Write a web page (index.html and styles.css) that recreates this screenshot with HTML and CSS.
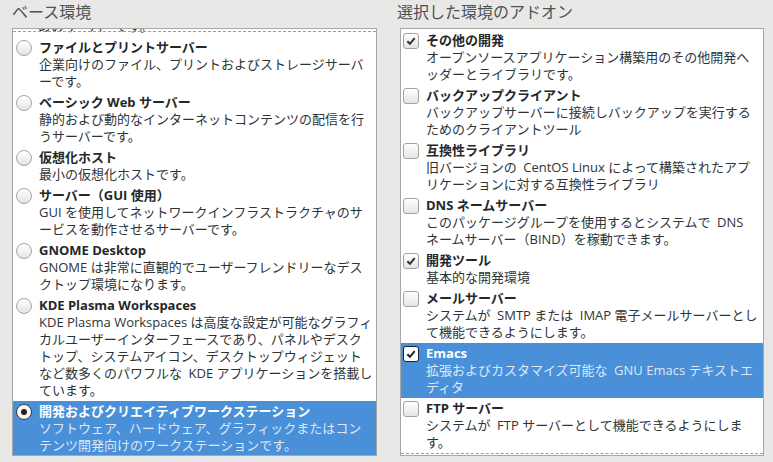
FILE: index.html
```html
<!DOCTYPE html>
<html lang="ja">

<head>
    <meta charset="UTF-8">
    <meta name="viewport" content="width=device-width, initial-scale=1.0">
    <title>ソフトウェアの選択</title>
    <link rel="stylesheet" href="styles.css">
</head>

<body>
    <div class="page">
        <section class="column">
            <h2 class="heading">ベース環境</h2>
            <div class="panel">
                <div class="undershoot topEdge"></div>
                <ul class="options scrolled">
                    <li class="option partial">
                        <div class="text">
                            <div class="desc">めのサーバーです。</div>
                        </div>
                    </li>
                    <li class="option">
                        <span class="radio"></span>
                        <div class="text">
                            <div class="title">ファイルとプリントサーバー</div>
                            <div class="desc">企業向けのファイル、プリントおよびストレージサーバ<br>ーです。</div>
                        </div>
                    </li>
                    <li class="option">
                        <span class="radio"></span>
                        <div class="text">
                            <div class="title">ベーシック Web サーバー</div>
                            <div class="desc">静的および動的なインターネットコンテンツの配信を行<br>うサーバーです。</div>
                        </div>
                    </li>
                    <li class="option">
                        <span class="radio"></span>
                        <div class="text">
                            <div class="title">仮想化ホスト</div>
                            <div class="desc">最小の仮想化ホストです。</div>
                        </div>
                    </li>
                    <li class="option">
                        <span class="radio"></span>
                        <div class="text">
                            <div class="title">サーバー（GUI 使用）</div>
                            <div class="desc">GUI を使用してネットワークインフラストラクチャのサ<br>ービスを動作させるサーバーです。</div>
                        </div>
                    </li>
                    <li class="option">
                        <span class="radio"></span>
                        <div class="text">
                            <div class="title">GNOME Desktop</div>
                            <div class="desc">GNOME は非常に直観的でユーザーフレンドリーなデス<br>クトップ環境になります。</div>
                        </div>
                    </li>
                    <li class="option">
                        <span class="radio"></span>
                        <div class="text">
                            <div class="title">KDE Plasma Workspaces</div>
                            <div class="desc">KDE Plasma Workspaces は高度な設定が可能なグラフィ<br>カルユーザーインターフェースであり、パネルやデスク<br>トップ、システムアイコン、デスクトップウィジェット<br>など数多くのパワフルな&ensp;KDE アプリケーションを搭載し<br>ています。</div>
                        </div>
                    </li>
                    <li class="option selected">
                        <span class="radio checked"></span>
                        <div class="text">
                            <div class="title">開発およびクリエイティブワークステーション</div>
                            <div class="desc">ソフトウェア、ハードウェア、グラフィックまたはコン<br>テンツ開発向けのワークステーションです。</div>
                        </div>
                    </li>
                </ul>
            </div>
        </section>

        <section class="column">
            <h2 class="heading addonHeading">選択した環境のアドオン</h2>
            <div class="panel">
                <ul class="options addons">
                    <li class="option">
                        <span class="check checked"><svg viewBox="0 0 16 16"><path d="M3.8 8.2 L6.8 11.2 L12.2 4.6"/></svg></span>
                        <div class="text">
                            <div class="title">その他の開発</div>
                            <div class="desc">オープンソースアプリケーション構築用のその他開発へ<br>ッダーとライブラリです。</div>
                        </div>
                    </li>
                    <li class="option">
                        <span class="check"></span>
                        <div class="text">
                            <div class="title">バックアップクライアント</div>
                            <div class="desc">バックアップサーバーに接続しバックアップを実行する<br>ためのクライアントツール</div>
                        </div>
                    </li>
                    <li class="option">
                        <span class="check"></span>
                        <div class="text">
                            <div class="title">互換性ライブラリ</div>
                            <div class="desc">旧バージョンの&ensp;CentOS Linux によって構築されたアプ<br>リケーションに対する互換性ライブラリ</div>
                        </div>
                    </li>
                    <li class="option">
                        <span class="check"></span>
                        <div class="text">
                            <div class="title">DNS ネームサーバー</div>
                            <div class="desc">このパッケージグループを使用するとシステムで&ensp;DNS<br>ネームサーバー（BIND）を稼動できます。</div>
                        </div>
                    </li>
                    <li class="option">
                        <span class="check checked"><svg viewBox="0 0 16 16"><path d="M3.8 8.2 L6.8 11.2 L12.2 4.6"/></svg></span>
                        <div class="text">
                            <div class="title">開発ツール</div>
                            <div class="desc">基本的な開発環境</div>
                        </div>
                    </li>
                    <li class="option">
                        <span class="check"></span>
                        <div class="text">
                            <div class="title">メールサーバー</div>
                            <div class="desc">システムが&ensp;SMTP または&ensp;IMAP 電子メールサーバーとし<br>て機能できるようにします。</div>
                        </div>
                    </li>
                    <li class="option selected">
                        <span class="check checked"><svg viewBox="0 0 16 16"><path d="M3.8 8.2 L6.8 11.2 L12.2 4.6"/></svg></span>
                        <div class="text">
                            <div class="title">Emacs</div>
                            <div class="desc">拡張およびカスタマイズ可能な&ensp;GNU Emacs テキストエ<br>ディタ</div>
                        </div>
                    </li>
                    <li class="option">
                        <span class="check"></span>
                        <div class="text">
                            <div class="title">FTP サーバー</div>
                            <div class="desc">システムが&ensp;FTP サーバーとして機能できるようにしま<br>す。</div>
                        </div>
                    </li>
                    <li class="option">
                        <span class="check"></span>
                    </li>
                </ul>
                <div class="undershoot bottomEdge"></div>
            </div>
        </section>
    </div>
</body>

</html>
```

FILE: styles.css
```css
* {
    box-sizing: border-box;
}

body {
    margin: 0;
    background: #e8e8e7;
    font-family: "Open Sans", "Noto Sans CJK JP", sans-serif;
    font-size: 13px;
    color: #2e3436;
}

.page {
    display: grid;
    grid-template-columns: 365px 364px;
    gap: 23px;
    padding: 3px 0 0 12px;
}

.heading {
    margin: 0 0 6px;
    font-size: 16px;
    line-height: 19px;
    font-weight: normal;
    color: #4f5152;
}

.addonHeading {
    margin-left: -3px;
}

.panel {
    position: relative;
    height: 428px;
    background: white;
    border: 1px solid #a7a7a5;
    overflow: hidden;
}

/* dashed hint drawn where the list keeps scrolling */
.undershoot {
    position: absolute;
    left: 0;
    right: 0;
    border-top: 1px dashed #9c9c9c;
    z-index: 2;
}

.topEdge {
    top: 2px;
}

.bottomEdge {
    bottom: 1px;
}

.options {
    list-style: none;
    margin: 0;
    padding: 0;
}

.scrolled {
    margin-top: -13px;
}

.addons {
    padding-top: 1px;
}

.option {
    display: flex;
    align-items: flex-start;
    gap: 7px;
    padding: 2px 4px 2px 3px;
    line-height: 17px;
}

.option.partial {
    padding-left: 25px;
}

.option .text {
    flex: 1;
    white-space: nowrap;
}

.option .title {
    font-weight: bold;
    color: #23282a;
}

.option.selected {
    background: #4a90d9;
}

.option.selected .title {
    color: white;
}

.option.selected .desc {
    color: #dce8f6;
}

.radio {
    flex: none;
    width: 16px;
    height: 16px;
    margin-top: 1px;
    border-radius: 50%;
    border: 1px solid #a3a3a1;
    background: linear-gradient(#ffffff, #e4e4e2);
    display: flex;
    align-items: center;
    justify-content: center;
}

.radio.checked {
    border-color: #3b3f40;
    background: linear-gradient(#ffffff, #eeeeec);
}

.radio.checked::after {
    content: "";
    width: 6px;
    height: 6px;
    border-radius: 50%;
    background: #1d2021;
}

.check {
    flex: none;
    width: 16px;
    height: 16px;
    margin: 1px 0 0 -1px;
    border-radius: 3px;
    border: 1px solid #a3a3a1;
    background: linear-gradient(#ffffff, #e4e4e2);
    display: flex;
}

.check svg {
    width: 14px;
    height: 14px;
}

.check path {
    fill: none;
    stroke: #2e3436;
    stroke-width: 2.3;
}

.selected .check {
    border-color: #1f2324;
    background: #ffffff;
}

.selected .check path {
    stroke: #1f2324;
}
```
